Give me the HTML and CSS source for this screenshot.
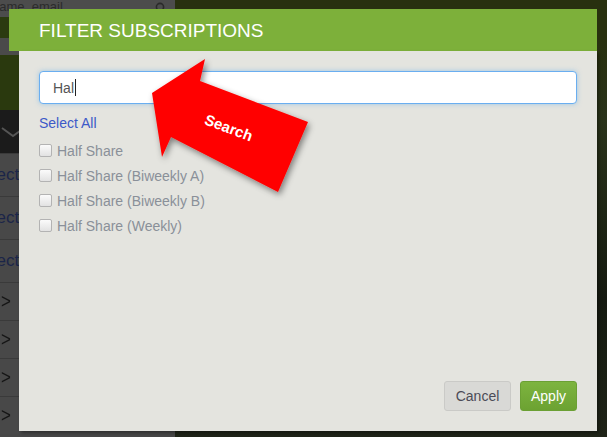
FILE: index.html
```html
<!DOCTYPE html>
<html>
<head>
<meta charset="utf-8">
<link rel="stylesheet" href="styles.css">
</head>
<body>
<div class="page">
  <aside class="side">
    <div class="search"><span class="search-text">name, email</span>
      <svg class="mag" width="12" height="12" viewBox="0 0 12 12"><circle cx="5" cy="5" r="3.6" fill="none" stroke="#2a2a2a" stroke-width="1.6"/><path d="M7.6 7.6 L10.5 10.5" stroke="#2a2a2a" stroke-width="1.8"/></svg>
    </div>
    <div class="band olive"></div>
    <div class="band gray"></div>
    <div class="band green"></div>
    <div class="band black">
      <svg width="30" height="14" viewBox="0 0 30 14"><path d="M2 3 L13 11 L24 3" fill="none" stroke="#555" stroke-width="2"/></svg>
    </div>
    <div class="row tall"><span class="cut">Select</span></div>
    <div class="row tall"><span class="cut">Select</span></div>
    <div class="row tall"><span class="cut">Select</span></div>
    <div class="row"><span class="chev">&gt;</span></div>
    <div class="row"><span class="chev">&gt;</span></div>
    <div class="row"><span class="chev">&gt;</span></div>
    <div class="row"><span class="chev">&gt;</span></div>
  </aside>
  <main class="bg"></main>
</div>

<div class="modal">
  <div class="modal-head">FILTER SUBSCRIPTIONS</div>
  <div class="modal-body">
    <div class="field"><span class="val">Hal</span><span class="caret"></span></div>
    <a class="select-all">Select All</a>
    <ul class="list">
      <li><span class="cb"></span>Half Share</li>
      <li><span class="cb"></span>Half Share (Biweekly A)</li>
      <li><span class="cb"></span>Half Share (Biweekly B)</li>
      <li><span class="cb"></span>Half Share (Weekly)</li>
    </ul>
    <div class="foot">
      <button class="btn cancel">Cancel</button>
      <button class="btn apply">Apply</button>
    </div>
  </div>
</div>

<svg class="arrow" width="607" height="437" viewBox="0 0 607 437">
  <defs>
    <filter id="sh" x="-20%" y="-20%" width="140%" height="140%">
      <feDropShadow dx="2" dy="3" stdDeviation="3" flood-color="#000" flood-opacity="0.45"/>
    </filter>
  </defs>
  <polygon points="152,93 205,59 200,81 308,122 278,192 171,137 162,157" fill="#ff0000" filter="url(#sh)"/>
  <text x="229" y="133" transform="rotate(21 229 127)" class="arrow-text" text-anchor="middle">Search</text>
</svg>
</body>
</html>
```

FILE: styles.css
```css
html, body {
  margin: 0;
  padding: 0;
}
body {
  width: 607px;
  height: 437px;
  overflow: hidden;
  background: #1b1f12;
  font-family: "Liberation Sans", Arial, sans-serif;
  position: relative;
}
.page {
  display: flex;
  height: 437px;
}
.side {
  width: 175px;
  display: flex;
  flex-direction: column;
  background: #474747;
}
.search {
  height: 17px;
  background: #4c4c4c;
  display: flex;
  align-items: center;
  justify-content: space-between;
  padding: 0 8px 0 0;
  font-size: 13px;
  color: #2b2b2b;
}
.search-text {
  margin-left: -8px;
  margin-top: -4px;
}
.mag {
  margin-top: -2px;
}
.band { flex: none; }
.olive { height: 21px; background: #2b3a10; }
.gray { height: 17px; background: #4a4a4a; }
.green { height: 55px; background: #2a390e; }
.black {
  height: 43px;
  background: #1b1b1b;
  display: flex;
  align-items: center;
}
.row {
  height: 38px;
  border-top: 1px solid #3a3a3a;
  box-sizing: border-box;
  display: flex;
  align-items: center;
  background: #484848;
  font-size: 16px;
}
.row.tall { height: 43px; }
.cut {
  margin-left: -28px;
  color: #1b2548;
  font-size: 17px;
}
.chev {
  color: #151515;
  font-size: 17px;
  margin-left: 1px;
  transform: scaleY(1.2);
}
.bg {
  flex: 1;
  background: linear-gradient(180deg, #28300f 0, #28300f 38px, #2a331a 120px, #151a10 300px, #1f2418 437px);
}

.modal {
  position: absolute;
  left: 9px;
  top: 9px;
  width: 588px;
  display: flex;
  flex-direction: column;
}
.modal-head {
  height: 42px;
  background: #7db03a;
  color: #fff;
  font-size: 19px;
  line-height: 43px;
  padding-left: 30px;
  letter-spacing: 0;
}
.modal-body {
  margin-left: 10px;
  height: 380px;
  box-sizing: border-box;
  background: #e4e4df;
  padding: 20px 20px 20px 20px;
  display: flex;
  flex-direction: column;
  box-shadow: 2px 2px 3px rgba(0,0,0,0.35);
}
.field {
  height: 33px;
  box-sizing: border-box;
  background: #fff;
  border: 1px solid #6aaef0;
  border-radius: 4px;
  box-shadow: 0 0 5px rgba(102,175,233,0.55);
  display: flex;
  align-items: center;
  padding-left: 13px;
  font-size: 14px;
  color: #555;
}
.caret {
  width: 1px;
  height: 17px;
  background: #222;
  margin-left: 1px;
}
.select-all {
  display: block;
  margin-top: 11px;
  font-size: 14px;
  line-height: 16px;
  color: #3d59c8;
}
.list {
  list-style: none;
  margin: 7px 0 0 0;
  padding: 0;
}
.list li {
  height: 25px;
  display: flex;
  align-items: center;
  font-size: 14px;
  color: #8a9099;
}
.cb {
  width: 11px;
  height: 11px;
  border: 1px solid #b3b3b3;
  border-radius: 2px;
  background: linear-gradient(#fbfbfb, #e2e2e2);
  margin-right: 5px;
  flex: none;
}
.foot {
  margin-top: auto;
  display: flex;
  justify-content: flex-end;
  gap: 9px;
}
.btn {
  height: 30px;
  border-radius: 3px;
  font-family: "Liberation Sans", Arial, sans-serif;
  font-size: 14px;
  padding: 0;
}
.cancel {
  width: 67px;
  background: #d9d9d6;
  border: 1px solid #cacac7;
  color: #4b4b57;
}
.apply {
  width: 57px;
  background: linear-gradient(#7db43f, #6ca232);
  border: 1px solid #6ba034;
  color: #fff;
}
.arrow {
  position: absolute;
  left: 0;
  top: 0;
  pointer-events: none;
}
.arrow-text {
  font-family: "Liberation Sans", Arial, sans-serif;
  font-weight: bold;
  font-size: 15px;
  fill: #fff;
}
```
